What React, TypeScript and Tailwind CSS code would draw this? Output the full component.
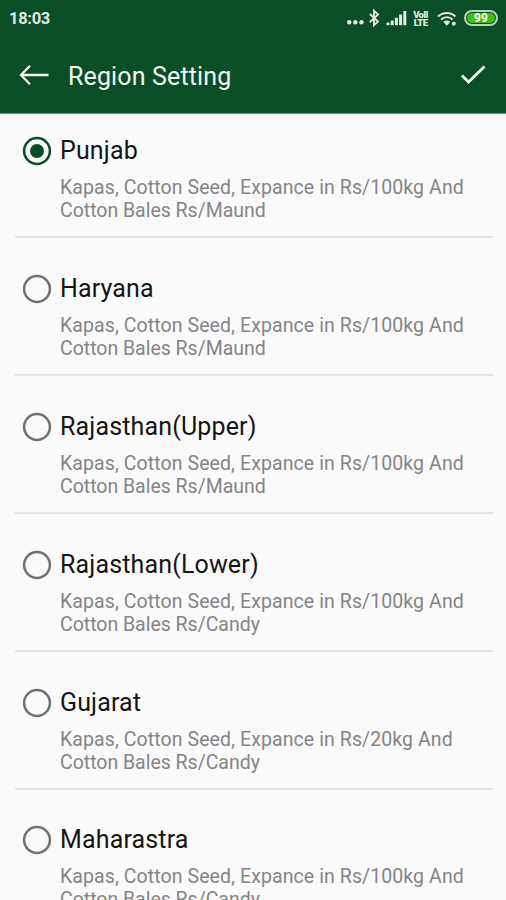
import { useState } from 'react';
import clsx from 'clsx';

type Region = {
  name: string;
  unit: string;
  rate: string;
};

const regions: Region[] = [
  { name: 'Punjab', unit: '100kg', rate: 'Maund' },
  { name: 'Haryana', unit: '100kg', rate: 'Maund' },
  { name: 'Rajasthan(Upper)', unit: '100kg', rate: 'Maund' },
  { name: 'Rajasthan(Lower)', unit: '100kg', rate: 'Candy' },
  { name: 'Gujarat', unit: '20kg', rate: 'Candy' },
  { name: 'Maharastra', unit: '100kg', rate: 'Candy' },
];

function StatusBar() {
  return (
    <div className="flex h-9 items-center pl-[9px] pr-2 text-[#dfeae2]">
      <span className="pt-[3px] text-[16.5px] font-bold leading-none tracking-[-0.3px]">18:03</span>
      <div className="ml-auto flex items-center">
        <svg width="19" height="20" viewBox="0 0 19 20" fill="currentColor">
          <circle cx="2.2" cy="14.2" r="2.2" />
          <circle cx="8.3" cy="14.2" r="2.2" />
          <circle cx="14.5" cy="14.2" r="2.2" />
        </svg>
        <svg className="ml-[2px]" width="13" height="20" viewBox="0 0 13 20" fill="none" stroke="currentColor" strokeWidth="1.9">
          <path d="M1.8 6 10 13.6 6 17.200V2.800l4 3.800L1.800 14.200" />
        </svg>
        <svg className="ml-[5px]" width="21" height="20" viewBox="0 0 21 20" fill="currentColor">
          <rect x="0.5" y="14.5" width="3" height="2.7" />
          <rect x="4.7" y="12.500" width="3" height="4.700" />
          <rect x="8.900" y="9.800" width="3" height="7.400" />
          <rect x="13.100" y="6.500" width="3" height="10.700" />
          <rect x="17.300" y="3" width="3" height="14.200" />
        </svg>
        <div className="ml-[5px] flex w-[17px] flex-col items-center pt-[2px] text-[9.5px] font-black leading-[8px] tracking-[-0.6px]">
          <span>VoII</span>
          <span>LTE</span>
        </div>
        <svg className="ml-2" width="20" height="20" viewBox="0 0 20 20" fill="none" stroke="currentColor">
          <path d="M1 8.500c5-4.800 12.500-4.800 17.500 0" strokeWidth="2" />
          <path d="M4 11.600c3.500-3.200 8.200-3.200 11.600 0" strokeWidth="2" />
          <path d="M6.300 13.800c2.100-1.900 4.900-1.900 7 0l-3.500 4z" fill="currentColor" stroke="none" />
          <circle cx="16.800" cy="15.800" r="2" fill="currentColor" stroke="none" />
        </svg>
        <div className="ml-[7px] flex h-4 w-[34px] rounded-full border-2 border-[#b5d3b8] p-px">
          <div className="flex flex-1 items-center justify-center rounded-full bg-[#43bd10] text-[12px] font-bold leading-none text-white">
            99
          </div>
        </div>
      </div>
    </div>
  );
}

function RadioMark({ checked }: { checked: boolean }) {
  return (
    <svg
      className={clsx('shrink-0', checked ? 'text-[#0a4d26]' : 'text-[#717171]')}
      width="30"
      height="30"
      viewBox="0 0 30 30"
    >
      <circle cx="15" cy="15" r="12.9" fill="none" stroke="currentColor" strokeWidth="2.5" />
      {checked && <circle cx="15" cy="15" r="7" fill="currentColor" />}
    </svg>
  );
}

export default function App() {
  const [selected, setSelected] = useState('Punjab');

  return (
    <div className="flex h-[900px] w-[506px] flex-col overflow-hidden bg-[#fafafa] font-['Roboto',sans-serif]">
      <header className="h-[114px] shrink-0 border-b border-[#71917c] bg-[#0a4e27] text-[#f3f8f4]">
        <StatusBar />
        <div className="flex h-[78px] items-center pl-[19px] pr-5">
          <button aria-label="Back">
            <svg width="30" height="24" viewBox="0 0 30 24" fill="none" stroke="currentColor" strokeWidth="2.3">
              <path d="M29.500 12H2.500M11 2.800 2 12l9 9.200" />
            </svg>
          </button>
          <h1 className="ml-[19px] pt-[3px] text-[25px] leading-8 tracking-[0.14px]">Region Setting</h1>
          <button className="ml-auto" aria-label="Save">
            <svg width="26" height="22" viewBox="0 0 26 22" fill="none" stroke="currentColor" strokeWidth="2.800">
              <path d="m2 11.500 6.500 6.500L24.500 2.500" />
            </svg>
          </button>
        </div>
      </header>

      <ul className="flex flex-col gap-[35.9px] pl-[15px] pr-[13px] pt-[22px]">
        {regions.map((region) => (
          <li key={region.name} className="h-[102px] shrink-0 border-b-2 border-[#e3e3e3]">
            <label className="flex cursor-pointer gap-2 pl-[7px]">
              <input
                type="radio"
                name="region"
                className="sr-only"
                checked={selected === region.name}
                onChange={() => setSelected(region.name)}
              />
              <RadioMark checked={selected === region.name} />
              <div>
                <div className="text-[25px] leading-[29px] tracking-[0.15px] text-[#151515]">{region.name}</div>
                <div className="mt-[11px] whitespace-nowrap text-[19.5px] leading-[23px] text-[#858585]">
                  <p className="tracking-[0.09px]">{`Kapas, Cotton Seed, Expance in Rs/${region.unit} And`}</p>
                  <p className="tracking-[-0.02px]">{`Cotton Bales Rs/${region.rate}`}</p>
                </div>
              </div>
            </label>
          </li>
        ))}
      </ul>
    </div>
  );
}
